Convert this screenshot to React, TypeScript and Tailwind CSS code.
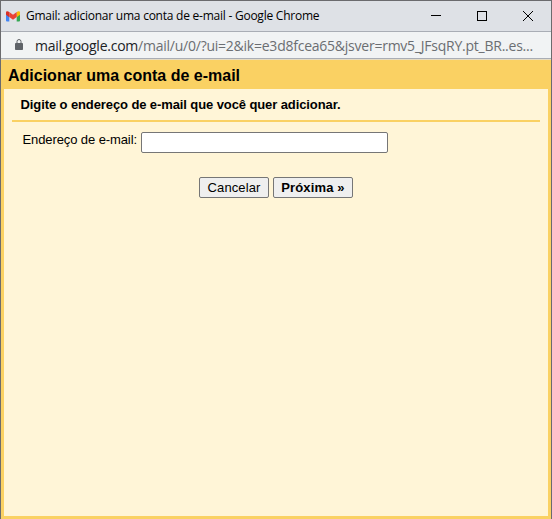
import React from 'react';

function GmailLogo() {
  return (
    <svg width="14" height="11" viewBox="0 0 14 11" className="shrink-0">
      <path d="M0 3.2h3.3V10.500H1a1 1 0 0 1-1-1z" fill="#4285f4" />
      <path d="M10.7 3.2H14V9.500a1 1 0 0 1-1 1h-2.300z" fill="#34a853" />
      <path d="M10.7 1.200C12-.1 14-.1 14 1.700v2l-3.300 2.500z" fill="#fbbc04" />
      <path d="M3.300 1.200C2-.1 0-.1 0 1.700v2l3.300 2.500z" fill="#d93025" />
      <path d="M3.300 1.100 7 3.800l3.700-2.700v5L7 8.800 3.300 6.100z" fill="#ea4335" />
    </svg>
  );
}

function LockIcon() {
  return (
    <svg width="8" height="11" viewBox="0 0 8 11" className="mb-px shrink-0">
      <path d="M2 4.5V2.500a2 2 0 0 1 4 0v2" fill="none" stroke="#5f6368" />
      <rect y="4" width="8" height="7" rx="0.8" fill="#5f6368" />
    </svg>
  );
}

function WindowControls() {
  return (
    <div className="ml-auto flex h-full">
      <button type="button" aria-label="Minimizar" className="flex w-[46px] items-center justify-center">
        <svg width="10" height="10" viewBox="0 0 10 10" shapeRendering="crispEdges">
          <path d="M0 4.5h10" stroke="#000" />
        </svg>
      </button>
      <button type="button" aria-label="Maximizar" className="flex w-[46px] items-center justify-center">
        <svg width="10" height="10" viewBox="0 0 10 10" shapeRendering="crispEdges">
          <rect x="0.5" y="0.5" width="9" height="9" fill="none" stroke="#000" />
        </svg>
      </button>
      <button type="button" aria-label="Fechar" className="flex w-[46px] items-center justify-center">
        <svg width="10" height="10" viewBox="0 0 10 10">
          <path d="M0 0l10 10M10 0L0 10" stroke="#000" />
        </svg>
      </button>
    </div>
  );
}

export default function App() {
  return (
    <div className="flex h-screen w-full flex-col overflow-hidden border-x border-t border-[#6b6b6e] bg-[#fad163] font-['Liberation_Sans',Arial,sans-serif] text-black">
      {/* Title bar */}
      <div className="flex h-[31px] shrink-0 items-center border-b border-[#a9adb5] bg-[#dee1e6] pl-[5px]">
        <GmailLogo />
        <span className="ml-1.5 whitespace-nowrap font-['Open_Sans','Noto_Sans',sans-serif] text-[12px] tracking-[-0.24px]">
          Gmail: adicionar uma conta de e-mail - Google Chrome
        </span>
        <WindowControls />
      </div>

      {/* Address bar */}
      <div className="flex h-[27px] shrink-0 items-center border-b border-[#a9adb5] bg-[#f1f3f4] pl-3.5">
        <LockIcon />
        <span className="ml-3 whitespace-nowrap font-['Open_Sans','Noto_Sans',sans-serif] text-[14px] tracking-[-0.24px] text-[#6b6e72]">
          <span className="text-[#202124]">mail.google.com</span>
          /mail/u/0/?ui=2&amp;ik=e3d8fcea65&amp;jsver=rmv5_JFsqRY.pt_BR..es...
        </span>
      </div>

      {/* Page */}
      <h1 className="h-[30px] shrink-0 border-t border-[#e6dcc3] pl-[7px] text-[16px] leading-[31px] font-bold">
        Adicionar uma conta de e-mail
      </h1>
      <div className="mx-[3px] mb-[3px] flex-1 bg-[#fff5d7] px-2">
        <div className="h-[33px] border-b-2 border-[#fad163] pl-[8.5px] text-[13px] leading-[31px] font-bold tracking-[-0.1px]">
          Digite o endereço de e-mail que você quer adicionar.
        </div>
        <div className="mt-2.5 flex pl-[10.5px] text-[13px]">
          <label htmlFor="email" className="w-[118.5px] leading-[16px] tracking-[-0.1px] whitespace-nowrap">
            Endereço de e-mail:
          </label>
          <input
            id="email"
            type="text"
            className="h-[21px] w-[247px] rounded-[2px] border border-[#767676] bg-white px-1"
          />
        </div>
        <div className="mt-6 flex gap-1 pl-[187px] text-[13px]">
          <button type="button" className="h-[21px] w-[70px] rounded-[2px] border border-[#767676] bg-[#efefef] tracking-[0.1px]">
            Cancelar
          </button>
          <button type="button" className="h-[21px] w-20 rounded-[2px] border border-[#767676] bg-[#efefef] font-bold tracking-[0.15px]">
            Próxima »
          </button>
        </div>
      </div>
    </div>
  );
}
